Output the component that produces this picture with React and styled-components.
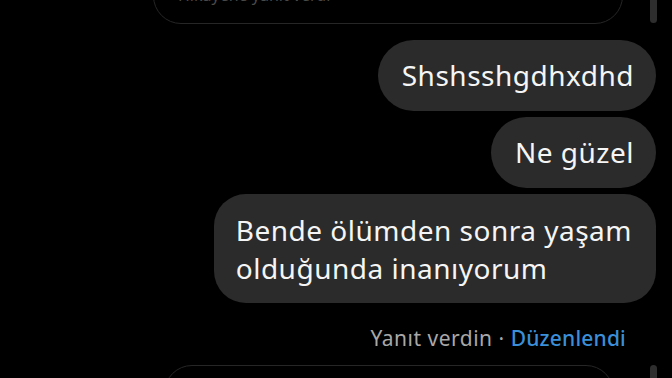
import React from "react";
import styled, { createGlobalStyle } from "styled-components";

const GlobalStyle = createGlobalStyle`
  html, body {
    margin: 0;
    padding: 0;
    background: #000;
  }
  body {
    font-family: "Noto Sans", Roboto, sans-serif;
    -webkit-font-smoothing: antialiased;
  }
`;

const Screen = styled.div`
  width: 672px;
  height: 378px;
  overflow: hidden;
  background: #000;
  display: flex;
  flex-direction: column;
`;

const CardRow = styled.div`
  position: relative;
  display: flex;
  padding-left: ${(p) => p.left}px;
  padding-right: ${(p) => p.right}px;
  margin-top: ${(p) => p.top || 0}px;
  flex-shrink: 0;
`;

const Card = styled.div`
  flex: 1;
  height: ${(p) => p.h}px;
  border: 1px solid #262626;
  border-radius: 28px;
  box-sizing: border-box;
  display: flex;
  align-items: flex-end;
  padding: 0 24px 17px;
`;

const CardText = styled.span`
  color: #4a4a4a;
  font-size: 16px;
`;

const Scroll = styled.div`
  position: absolute;
  right: 15px;
  width: 7px;
  border-radius: 4px;
  background: #2e2e2e;
  top: ${(p) => p.from};
  bottom: ${(p) => p.to};
`;

const Thread = styled.div`
  display: flex;
  flex-direction: column;
  align-items: flex-end;
  gap: 6px;
  padding: 16px 16px 0 0;
`;

const Bubble = styled.div`
  background: #2b2b2b;
  color: #f5f5f5;
  font-size: 28px;
  letter-spacing: 0.5px;
  line-height: 38px;
  padding: ${(p) => (p.multi ? "17px 24px 16px 22px" : "16px 22px 17px 24px")};
  border-radius: ${(p) => (p.multi ? "32px" : "36px")};
`;

const Meta = styled.div`
  align-self: flex-end;
  margin: 23px 46px 0 0;
  font-size: 21px;
  letter-spacing: 0.5px;
  line-height: 24px;
  color: #a8a8a8;
`;

const Edited = styled.span`
  color: #3a8fd8;
  font-weight: 500;
  letter-spacing: 0.2px;
`;

export default function App() {
  return (
    <>
      <GlobalStyle />
      <Screen>
        <CardRow left={153} right={49} top={-40}>
          <Card h={64}>
            <CardText>Hikayene yanıt verdi</CardText>
          </Card>
          <Scroll from="0" to="1px" />
        </CardRow>
        <Thread>
          <Bubble>Shshsshgdhxdhd</Bubble>
          <Bubble>Ne güzel</Bubble>
          <Bubble multi>
            Bende ölümden sonra yaşam
            <br />
            olduğunda inanıyorum
          </Bubble>
        </Thread>
        <Meta>
          Yanıt verdin · <Edited>Düzenlendi</Edited>
        </Meta>
        <CardRow left={164} right={58} top={15}>
          <Card h={80} />
          <Scroll from="0" to="0" />
        </CardRow>
      </Screen>
    </>
  );
}
